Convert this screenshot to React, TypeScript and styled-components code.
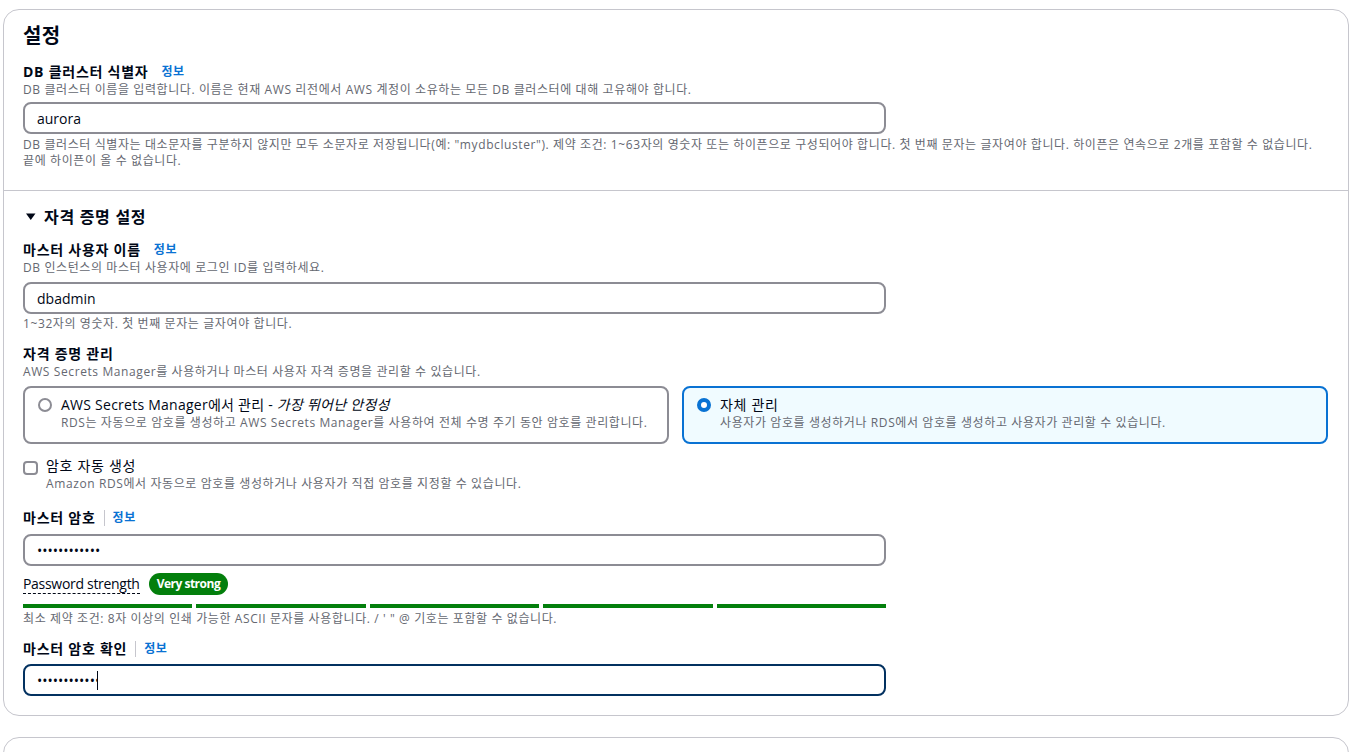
import React from 'react'
import styled, { createGlobalStyle } from 'styled-components'

const GlobalStyle = createGlobalStyle`
  * { box-sizing: border-box; }
  body {
    margin: 0;
    background: #ffffff;
    color: #000716;
    font-family: "Open Sans", "Noto Sans CJK KR", sans-serif;
    word-break: keep-all;
  }
`

const Page = styled.div`
  display: flex;
  flex-direction: column;
  gap: 21px;
  padding: 9px 10px 0 3px;
`

const Card = styled.div<{ $min?: number }>`
  border: 1px solid #c6c6cd;
  border-radius: 16px;
  background: #fff;
  min-height: ${p => p.$min ?? 0}px;
`

const Section = styled.div<{ $divided?: boolean }>`
  padding: ${p => (p.$divided ? '16px 20px 19px 19px' : '14px 20px 21px 19px')};
  border-top: ${p => (p.$divided ? '1px solid #c6c6cd' : 'none')};
  display: flex;
  flex-direction: column;
`

const Title = styled.h2`
  margin: 0;
  font-size: 20px;
  line-height: 24px;
  font-weight: 700;
  letter-spacing: 0.3px;
`

const Expander = styled.div`
  display: flex;
  align-items: center;
  gap: 5px;
  font-size: 16px;
  line-height: 20px;
  font-weight: 700;
  letter-spacing: 0.7px;
`

const LabelRow = styled.div<{ $top: number }>`
  display: flex;
  align-items: center;
  margin-top: ${p => p.$top}px;
  font-size: 14px;
  line-height: 20px;
  font-weight: 700;
  letter-spacing: 0.75px;
`

const InfoLink = styled.a<{ $divider?: boolean }>`
  font-size: 12px;
  font-weight: 700;
  letter-spacing: 0.6px;
  color: #0972d3;
  text-decoration: none;
  margin-left: ${p => (p.$divider ? 0 : 13)}px;
`

const Divider = styled.span`
  width: 1px;
  height: 16px;
  background: #c6c6cd;
  margin: 0 8px 0 8px;
`

const Hint = styled.div<{ $top?: number }>`
  margin-top: ${p => p.$top ?? 0}px;
  font-size: 12px;
  line-height: 16px;
  letter-spacing: 0.6px;
  color: #656871;
  word-break: keep-all;
`

const TextInput = styled.input<{ $top: number }>`
  display: block;
  width: 100%;
  max-width: 863px;
  height: 32px;
  margin-top: ${p => p.$top}px;
  padding: 0 12px;
  border: 2px solid #8c8c94;
  border-radius: 8px;
  background: #fff;
  font-family: inherit;
  font-size: 14px;
  color: #000716;
  outline: none;
`

const FocusBox = styled.div<{ $top: number }>`
  display: flex;
  align-items: center;
  max-width: 863px;
  height: 32px;
  margin-top: ${p => p.$top}px;
  padding: 0 12px;
  border: 2px solid #033160;
  border-radius: 8px;
  background: #fff;
`

const BareInput = styled.input`
  width: 60px;
  padding: 0;
  border: none;
  outline: none;
  background: transparent;
  font-family: inherit;
  font-size: 14px;
  color: #000716;
  caret-color: transparent;
`

const Caret = styled.span`
  width: 1px;
  height: 19px;
  background: #000716;
`

const Tiles = styled.div`
  display: grid;
  grid-template-columns: 1fr 1fr;
  gap: 13px;
  margin-top: 6px;
`

const Tile = styled.label<{ $selected?: boolean }>`
  display: flex;
  gap: 9px;
  padding: 7px 14px 11px 13px;
  border: 2px solid ${p => (p.$selected ? '#0972d3' : '#8c8c94')};
  border-radius: 8px;
  background: ${p => (p.$selected ? '#f0fbff' : '#fff')};
  cursor: pointer;
`

const RadioDot = styled.span<{ $selected?: boolean }>`
  flex: none;
  width: 14px;
  height: 14px;
  margin-top: 3px;
  border-radius: 50%;
  border: ${p => (p.$selected ? '4px solid #0972d3' : '2px solid #8c8c94')};
  background: #fff;
`

const TileText = styled.div`
  display: flex;
  flex-direction: column;
`

const TileTitle = styled.div<{ $spacing?: number }>`
  font-size: 14px;
  line-height: 20px;
  font-weight: 400;
  letter-spacing: ${p => p.$spacing ?? 0.4}px;
  em { font-style: italic; }
`

const CheckRow = styled.label`
  display: flex;
  gap: 8px;
  margin-top: 12px;
  cursor: pointer;
`

const CheckBox = styled.span`
  flex: none;
  width: 15px;
  height: 14px;
  margin-top: 5px;
  border: 2px solid #8c8c94;
  border-radius: 4px;
  background: #fff;
`

const StrengthRow = styled.div`
  display: flex;
  align-items: center;
  gap: 9px;
  margin-top: 7px;
`

const StrengthLabel = styled.span`
  font-size: 14px;
  line-height: 18px;
  letter-spacing: -0.3px;
  border-bottom: 1px dashed #000716;
`

const Badge = styled.span`
  height: 22px;
  padding: 0 8px;
  border-radius: 11px;
  background: #037f0c;
  color: #fff;
  font-size: 12px;
  font-weight: 700;
  line-height: 22px;
  letter-spacing: -0.5px;
`

const Bars = styled.div`
  display: flex;
  gap: 4px;
  max-width: 863px;
  margin-top: 9px;
`

const Bar = styled.span`
  flex: 1;
  height: 4px;
  background: #037f0c;
`

const CaretDown = () => (
  <svg width="16" height="16" viewBox="0 0 16 16" aria-hidden>
    <polygon points="3,4.5 12.5,4.5 7.75,11" fill="#000716" />
  </svg>
)

export default function App() {
  return (
    <>
      <GlobalStyle />
      <Page>
        <Card>
          <Section>
            <Title>설정</Title>
            <LabelRow $top={14}>
              DB 클러스터 식별자<InfoLink href="#">정보</InfoLink>
            </LabelRow>
            <Hint>
              DB 클러스터 이름을 입력합니다. 이름은 현재 AWS 리전에서 AWS 계정이 소유하는 모든 DB 클러스터에 대해 고유해야 합니다.
            </Hint>
            <TextInput $top={4} defaultValue="aurora" />
            <Hint $top={3}>
              DB 클러스터 식별자는 대소문자를 구분하지 않지만 모두 소문자로 저장됩니다(예: "mydbcluster"). 제약 조건: 1~63자의 영숫자 또는 하이픈으로 구성되어야 합니다. 첫 번째 문자는 글자여야 합니다. 하이픈은 연속으로 2개를 포함할 수 없습니다. 끝에 하이픈이 올 수 없습니다.
            </Hint>
          </Section>

          <Section $divided>
            <Expander>
              <CaretDown />
              자격 증명 설정
            </Expander>

            <LabelRow $top={13}>
              마스터 사용자 이름<InfoLink href="#">정보</InfoLink>
            </LabelRow>
            <Hint>DB 인스턴스의 마스터 사용자에 로그인 ID를 입력하세요.</Hint>
            <TextInput $top={6} defaultValue="dbadmin" />
            <Hint $top={2}>1~32자의 영숫자. 첫 번째 문자는 글자여야 합니다.</Hint>

            <LabelRow $top={12}>자격 증명 관리</LabelRow>
            <Hint>AWS Secrets Manager를 사용하거나 마스터 사용자 자격 증명을 관리할 수 있습니다.</Hint>
            <Tiles>
              <Tile>
                <RadioDot />
                <TileText>
                  <TileTitle $spacing={0.25}>
                    AWS Secrets Manager에서 관리 - <em>가장 뛰어난 안정성</em>
                  </TileTitle>
                  <Hint>RDS는 자동으로 암호를 생성하고 AWS Secrets Manager를 사용하여 전체 수명 주기 동안 암호를 관리합니다.</Hint>
                </TileText>
              </Tile>
              <Tile $selected>
                <RadioDot $selected />
                <TileText>
                  <TileTitle $spacing={0.7}>자체 관리</TileTitle>
                  <Hint>사용자가 암호를 생성하거나 RDS에서 암호를 생성하고 사용자가 관리할 수 있습니다.</Hint>
                </TileText>
              </Tile>
            </Tiles>

            <CheckRow>
              <CheckBox />
              <TileText>
                <TileTitle $spacing={0.7}>암호 자동 생성</TileTitle>
                <Hint>Amazon RDS에서 자동으로 암호를 생성하거나 사용자가 직접 암호를 지정할 수 있습니다.</Hint>
              </TileText>
            </CheckRow>

            <LabelRow $top={16}>
              마스터 암호<Divider />
              <InfoLink href="#" $divider>정보</InfoLink>
            </LabelRow>
            <TextInput $top={6} type="password" defaultValue="Aurora#2024x" />
            <StrengthRow>
              <StrengthLabel>Password strength</StrengthLabel>
              <Badge>Very strong</Badge>
            </StrengthRow>
            <Bars>
              {[0, 1, 2, 3, 4].map(i => (
                <Bar key={i} />
              ))}
            </Bars>
            <Hint $top={3}>최소 제약 조건: 8자 이상의 인쇄 가능한 ASCII 문자를 사용합니다. / ' " @ 기호는 포함할 수 없습니다.</Hint>

            <LabelRow $top={12}>
              마스터 암호 확인<Divider />
              <InfoLink href="#" $divider>정보</InfoLink>
            </LabelRow>
            <FocusBox $top={5}>
              <BareInput type="password" defaultValue="Aurora#2024x" />
              <Caret />
            </FocusBox>
          </Section>
        </Card>
        <Card $min={40} />
      </Page>
    </>
  )
}
